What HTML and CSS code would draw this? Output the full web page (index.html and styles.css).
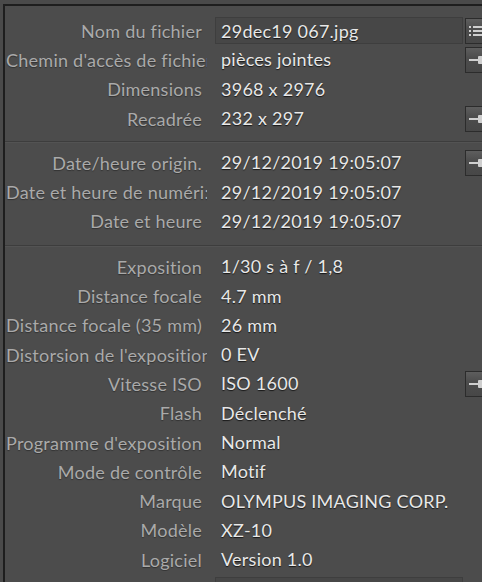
FILE: index.html
```html
<!DOCTYPE html>
<html lang="fr">
<head>
<meta charset="utf-8">
<title>Métadonnées</title>
<link rel="stylesheet" href="styles.css">
</head>
<body>
<div class="panel">
  <div class="section s1">
    <div class="row">
      <div class="label">Nom du fichier</div>
      <div class="value field">29dec19 067.jpg</div>
      <div class="btn"><svg width="22" height="22" viewBox="0 0 22 22"><g fill="#cfcfcf"><rect x="3" y="6" width="2" height="2"/><rect x="3" y="10" width="2" height="2"/><rect x="3" y="14" width="2" height="2"/><rect x="7" y="6" width="14" height="2"/><rect x="7" y="10" width="14" height="2"/><rect x="7" y="14" width="14" height="2"/></g></svg></div>
    </div>
    <div class="row">
      <div class="label">Chemin d'accès de fichier</div>
      <div class="value">pièces jointes</div>
      <div class="btn"><svg width="22" height="22" viewBox="0 0 22 22"><rect x="3" y="10" width="10" height="2" fill="#cfcfcf"/><rect x="12" y="7" width="6" height="8" rx="1" fill="#cfcfcf"/></svg></div>
    </div>
    <div class="row">
      <div class="label">Dimensions</div>
      <div class="value">3968 x 2976</div>
    </div>
    <div class="row">
      <div class="label">Recadrée</div>
      <div class="value">232 x 297</div>
      <div class="btn"><svg width="22" height="22" viewBox="0 0 22 22"><rect x="3" y="10" width="10" height="2" fill="#cfcfcf"/><rect x="12" y="7" width="6" height="8" rx="1" fill="#cfcfcf"/></svg></div>
    </div>
  </div>
  <div class="section s2">
    <div class="row">
      <div class="label">Date/heure origin.</div>
      <div class="value">29/12/2019 19:05:07</div>
      <div class="btn"><svg width="22" height="22" viewBox="0 0 22 22"><rect x="3" y="10" width="10" height="2" fill="#cfcfcf"/><rect x="12" y="7" width="6" height="8" rx="1" fill="#cfcfcf"/></svg></div>
    </div>
    <div class="row">
      <div class="label">Date et heure de numéri:</div>
      <div class="value">29/12/2019 19:05:07</div>
    </div>
    <div class="row">
      <div class="label">Date et heure</div>
      <div class="value">29/12/2019 19:05:07</div>
    </div>
  </div>
  <div class="section s3">
    <div class="row">
      <div class="label">Exposition</div>
      <div class="value">1/30 s à f / 1,8</div>
    </div>
    <div class="row">
      <div class="label">Distance focale</div>
      <div class="value">4.7 mm</div>
    </div>
    <div class="row">
      <div class="label">Distance focale (35 mm)</div>
      <div class="value">26 mm</div>
    </div>
    <div class="row">
      <div class="label">Distorsion de l'exposition</div>
      <div class="value">0 EV</div>
    </div>
    <div class="row">
      <div class="label">Vitesse ISO</div>
      <div class="value">ISO 1600</div>
      <div class="btn"><svg width="22" height="22" viewBox="0 0 22 22"><rect x="3" y="10" width="10" height="2" fill="#cfcfcf"/><rect x="12" y="7" width="6" height="8" rx="1" fill="#cfcfcf"/></svg></div>
    </div>
    <div class="row">
      <div class="label">Flash</div>
      <div class="value">Déclenché</div>
    </div>
    <div class="row">
      <div class="label">Programme d'exposition</div>
      <div class="value">Normal</div>
    </div>
    <div class="row">
      <div class="label">Mode de contrôle</div>
      <div class="value">Motif</div>
    </div>
    <div class="row">
      <div class="label">Marque</div>
      <div class="value">OLYMPUS IMAGING CORP.</div>
    </div>
    <div class="row">
      <div class="label">Modèle</div>
      <div class="value">XZ-10</div>
    </div>
    <div class="row">
      <div class="label">Logiciel</div>
      <div class="value">Version 1.0</div>
    </div>
    <div class="row last">
      <div class="label"></div>
      <div class="value field"></div>
    </div>
  </div>
</div>
</body>
</html>
```
FILE: styles.css
```css
html, body {
  margin: 0;
  padding: 0;
  height: 100%;
  overflow: hidden;
  background: #4a4a4a;
}
.panel {
  margin: 4px 0 0 3px;
  border-top: 2px solid #1e1e1e;
  border-left: 2px solid #1e1e1e;
  background: #4c4c4c;
  width: 520px;
  min-height: 700px;
  font-family: Lato, "Open Sans", sans-serif;
  font-size: 18px;
  letter-spacing: 0.25px;
}
.section {
  border-bottom: 1px solid #3d3d3d;
  box-shadow: 0 1px 0 #535353;
}
.s1 { padding: 10px 0 8px; }
.s2 { padding: 6px 0 9px; }
.s3 { padding: 6px 0 0; border-bottom: none; box-shadow: none; }
.row {
  display: grid;
  grid-template-columns: 202px 248px 24px;
  column-gap: 8px;
  height: 29.3px;
  align-items: center;
}
.row.last { align-items: end; }
.row > .btn { margin-left: -6px; }
.label {
  color: #aaaaaa;
  text-align: right;
  white-space: nowrap;
  overflow: hidden;
  padding: 0 5px 0 1px;
  text-shadow: 0 1px 1px rgba(0,0,0,0.35);
}
.value {
  color: #e8e8e8;
  white-space: nowrap;
  padding-left: 6px;
  text-shadow: 0 1px 1px rgba(0,0,0,0.7);
  line-height: 27px;
  height: 27px;
  box-sizing: border-box;
}
.field {
  background: #474747;
  border: 1px solid #3e3e3e;
  padding-left: 5px;
}
.btn {
  grid-column: 3;
  width: 24px;
  height: 26px;
  box-sizing: border-box;
  border: 1px solid #2c2c2c;
  background: linear-gradient(#5e5e5e, #4d4d4d 40%, #474747);
  display: flex;
  align-items: center;
}
.btn svg { display: block; }
```
